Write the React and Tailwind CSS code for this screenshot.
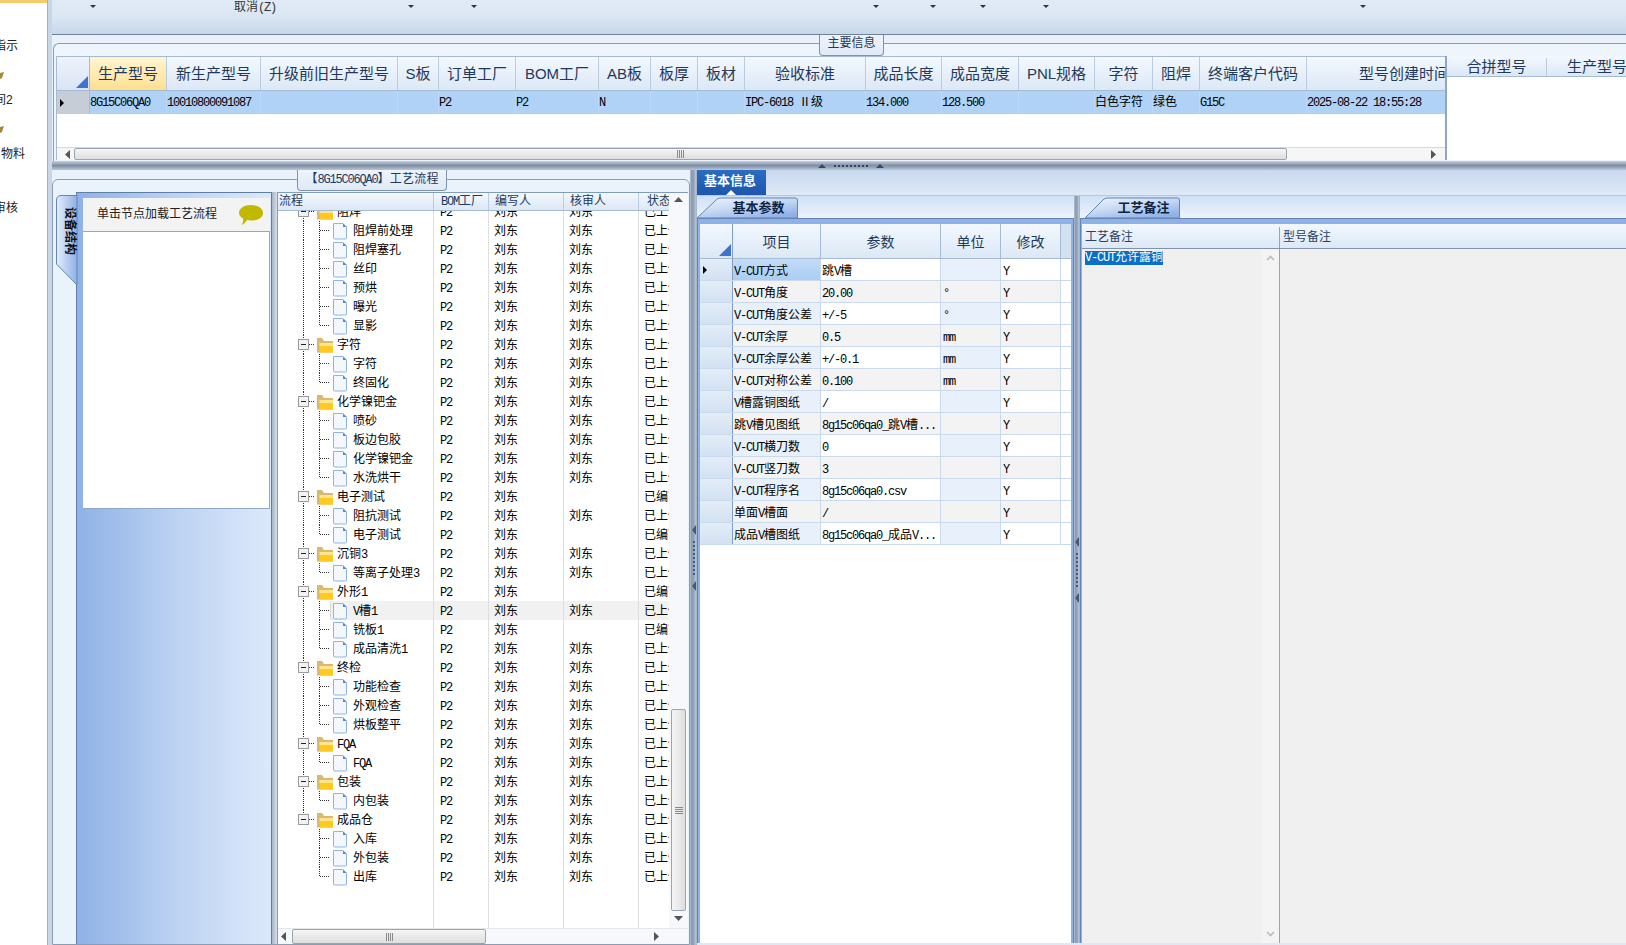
const monoCjk = "font-['Liberation_Mono','Noto_Sans_CJK_SC',monospace]";
const sansCjk = "font-['Liberation_Sans','Noto_Sans_CJK_SC',sans-serif]";

const topCols = [
  { label: "生产型号", w: "w-[77px]", value: "8G15C06QA0", active: true },
  { label: "新生产型号", w: "w-[94px]", value: "10010800091087" },
  { label: "升级前旧生产型号", w: "w-[137px]", value: "" },
  { label: "S板", w: "w-[41px]", value: "" },
  { label: "订单工厂", w: "w-[77px]", value: "P2" },
  { label: "BOM工厂", w: "w-[83px]", value: "P2" },
  { label: "AB板", w: "w-[52px]", value: "N" },
  { label: "板厚", w: "w-[47px]", value: "" },
  { label: "板材", w: "w-[47px]", value: "" },
  { label: "验收标准", w: "w-[121px]", value: "IPC-6018 Ⅱ级" },
  { label: "成品长度", w: "w-[76px]", value: "134.000" },
  { label: "成品宽度", w: "w-[77px]", value: "128.500" },
  { label: "PNL规格", w: "w-[76px]", value: "" },
  { label: "字符", w: "w-[58px]", value: "白色字符" },
  { label: "阻焊", w: "w-[47px]", value: "绿色" },
  { label: "终端客户代码", w: "w-[107px]", value: "G15C" },
  { label: "型号创建时间", w: "w-[140px]", value: "2025-08-22 18:55:28", pad: true },
];

// name, type (f folder / l leaf / e last leaf), has reviewer, status
const treeRows = [
  ["阻焊", "f", 1, "已上传"], ["阻焊前处理", "l", 1, "已上传"], ["阻焊塞孔", "l", 1, "已上传"], ["丝印", "l", 1, "已上传"],
  ["预烘", "l", 1, "已上传"], ["曝光", "l", 1, "已上传"], ["显影", "e", 1, "已上传"],
  ["字符", "f", 1, "已上传"], ["字符", "l", 1, "已上传"], ["终固化", "e", 1, "已上传"],
  ["化学镍钯金", "f", 1, "已上传"], ["喷砂", "l", 1, "已上传"], ["板边包胶", "l", 1, "已上传"], ["化学镍钯金", "l", 1, "已上传"], ["水洗烘干", "e", 1, "已上传"],
  ["电子测试", "f", 0, "已编写"], ["阻抗测试", "l", 1, "已上传"], ["电子测试", "e", 0, "已编写"],
  ["沉铜3", "f", 1, "已上传"], ["等离子处理3", "e", 1, "已上传"],
  ["外形1", "f", 0, "已编写"], ["V槽1", "l", 1, "已上传"], ["铣板1", "l", 0, "已编写"], ["成品清洗1", "e", 1, "已上传"],
  ["终检", "f", 1, "已上传"], ["功能检查", "l", 1, "已上传"], ["外观检查", "l", 1, "已上传"], ["烘板整平", "e", 1, "已上传"],
  ["FQA", "f", 1, "已上传"], ["FQA", "e", 1, "已上传"],
  ["包装", "f", 1, "已上传"], ["内包装", "e", 1, "已上传"],
  ["成品仓", "f", 1, "已上传"], ["入库", "l", 1, "已上传"], ["外包装", "l", 1, "已上传"], ["出库", "e", 1, "已上传"],
];

const params = [
  ["V-CUT方式", "跳V槽", "", "Y"],
  ["V-CUT角度", "20.00", "°", "Y"],
  ["V-CUT角度公差", "+/-5", "°", "Y"],
  ["V-CUT余厚", "0.5", "mm", "Y"],
  ["V-CUT余厚公差", "+/-0.1", "mm", "Y"],
  ["V-CUT对称公差", "0.100", "mm", "Y"],
  ["V槽露铜图纸", "/", "", "Y"],
  ["跳V槽见图纸", "8g15c06qa0_跳V槽...", "", "Y"],
  ["V-CUT横刀数", "0", "", "Y"],
  ["V-CUT竖刀数", "3", "", "Y"],
  ["V-CUT程序名", "8g15c06qa0.csv", "", "Y"],
  ["单面V槽面", "/", "", "Y"],
  ["成品V槽图纸", "8g15c06qa0_成品V...", "", "Y"],
];

// latin runs are squeezed to the half width of the original bitmap font
function T({ children }) {
  const parts = String(children).split(/([\x00-\x7f]+)/).filter(Boolean);
  return (
    <>
      {parts.map((p, i) =>
        /^[\x00-\x7f]+$/.test(p) ? (
          <span key={i} className="tracking-[-1.2px] whitespace-pre">{p}</span>
        ) : (
          <span key={i}>{p}</span>
        )
      )}
    </>
  );
}

function Caret() {
  return <div className="w-0 h-0 border-x-[3px] border-t-[3px] border-x-transparent border-t-[#333] mt-[5px]" />;
}

function RowArrow() {
  return <div className="w-0 h-0 border-y-[4px] border-l-[4px] border-y-transparent border-l-black" />;
}

function CornerMark() {
  return (
    <svg width="12" height="12" className="absolute right-[1px] bottom-[2px]">
      <polygon points="12,0 12,12 0,12" fill="#3f74c9" />
    </svg>
  );
}

function ArrowIcon({ dir }) {
  const pts = {
    left: "6,0 6,9 1,4.5",
    right: "0,0 0,9 5,4.5",
    up: "0,5 9,5 4.5,0",
    down: "0,0 9,0 4.5,5",
  }[dir];
  return (
    <svg width="9" height="9" className="shrink-0">
      <polygon points={pts} fill="#555" />
    </svg>
  );
}

function GripLines({ vertical }) {
  return vertical ? (
    <div className="flex flex-col gap-[1px]">
      {[0, 1, 2, 3].map((i) => <div key={i} className="w-[8px] h-[1px] bg-[#8a8a8a]" />)}
    </div>
  ) : (
    <div className="flex gap-[1px]">
      {[0, 1, 2, 3].map((i) => <div key={i} className="w-[1px] h-[8px] bg-[#8a8a8a]" />)}
    </div>
  );
}

function VGrip({ w }) {
  return (
    <div className={`${w} shrink-0 h-full bg-gradient-to-r from-[#8d9bae] via-[#8fa1ba] to-[#b9c7d9] flex flex-col items-center justify-center gap-[6px] border-x border-[#a9b6c6]`}>
      <div className="w-0 h-0 border-y-[5px] border-r-[4px] border-y-transparent border-r-[#44597a]" />
      <div className="flex flex-col gap-[2px]">
        {Array.from({ length: 9 }).map((_, i) => <div key={i} className="w-[2px] h-[2px] bg-[#3f5a86]" />)}
      </div>
      <div className="w-0 h-0 border-y-[5px] border-r-[4px] border-y-transparent border-r-[#44597a]" />
    </div>
  );
}

function SlantTab({ label, w }) {
  return (
    <div className={`relative ${w} h-[22px] flex items-center justify-center pl-[22px] pt-[4px] text-[13px] font-bold text-[#10243f]`}>
      <svg className="absolute inset-0 w-full h-full" viewBox="0 0 100 22" preserveAspectRatio="none">
        <defs>
          <linearGradient id="tabFill" x1="0" y1="0" x2="0.7" y2="1">
            <stop offset="0" stopColor="#f2f7fe" />
            <stop offset="0.55" stopColor="#c2d6f3" />
            <stop offset="1" stopColor="#8fb1e6" />
          </linearGradient>
        </defs>
        <path d="M0 22 L20 3 Q22 2 24 2 L97 2 Q99.5 2 99.5 4 L99.5 22 Z" fill="url(#tabFill)" stroke="#5f86b6" strokeWidth="1" vectorEffect="non-scaling-stroke" />
      </svg>
      <span className="relative">{label}</span>
    </div>
  );
}

function GroupTab({ children, className }) {
  return (
    <div className={`absolute h-[21px] flex items-center justify-center border border-t-0 border-[#7f93ad] rounded-b-[4px] bg-gradient-to-b from-[#eef4fb] to-[#dfe9f6] text-[12px] text-[#1e395b] ${className}`}>
      {children}
    </div>
  );
}

function TreePrefix({ type, lastGroup }) {
  const folder = type === "f";
  const parentLine = folder
    ? <line x1="25.5" y1="0" x2="25.5" y2={lastGroup ? 5 : 19} stroke="#333" strokeDasharray="1 1" />
    : lastGroup ? null : <line x1="25.5" y1="0" x2="25.5" y2="19" stroke="#333" strokeDasharray="1 1" />;
  return (
    <svg width={folder ? 59 : 75} height="19" className="shrink-0" shapeRendering="crispEdges">
      {parentLine}
      {folder ? (
        <g>
          <line x1="31" y1="9.5" x2="37" y2="9.5" stroke="#333" strokeDasharray="1 1" />
          <rect x="20.5" y="4.5" width="10" height="10" fill="#f2f2f2" stroke="#9a9a9a" />
          <line x1="23" y1="9.5" x2="28" y2="9.5" stroke="#222" />
          <g shapeRendering="auto">
            <path d="M39 3 L39 17.5 L55 17.5 L55 6 L46 6 L44 3 Z" fill="#d9b873" />
            <path d="M41.5 8 L55 8 L55 17.5 L41.5 17.5 Z" fill="#ffc91f" />
            <path d="M41.5 8 L55 8 L55 11 L41.5 11 Z" fill="#ffe58a" />
          </g>
        </g>
      ) : (
        <g>
          <line x1="41.5" y1="0" x2="41.5" y2={type === "e" ? 9.5 : 19} stroke="#333" strokeDasharray="1 1" />
          <line x1="42" y1="9.5" x2="52" y2="9.5" stroke="#333" strokeDasharray="1 1" />
          <g shapeRendering="auto">
            <path d="M55.5 2.5 L65 2.5 L68.5 6 L68.5 17 Q68.5 18 67.5 18 L56.5 18 Q55.5 18 55.5 17 Z" fill="#f4f8fe" stroke="#8fb4e2" />
            <path d="M65 2.5 L65 6 L68.5 6 Z" fill="#4f8ad6" />
          </g>
        </g>
      )}
    </svg>
  );
}

function TreeRow({ row, index }) {
  const [name, type, reviewer, status] = row;
  const selected = name === "V槽1";
  const lastGroup = index >= 32;
  return (
    <div className={`flex h-[19px] shrink-0 items-center text-[12px] text-black ${index === 0 ? "-mt-[9px]" : ""}`}>
      <div className="relative w-[155px] h-full flex items-center shrink-0">
        {selected && <div className="absolute left-[52px] right-0 inset-y-0 bg-[#f1f1f1] rounded-l-[3px] border-l border-[#d5d5d5]" />}
        <div className="relative flex items-center">
          <TreePrefix type={type} lastGroup={lastGroup} />
          <span className="whitespace-nowrap pt-[2px]"><T>{name}</T></span>
        </div>
      </div>
      <div className={`w-[55px] h-full flex items-center pl-[6px] pt-[2px] border-l border-[#dfdfdf] shrink-0 ${selected ? "bg-[#f1f1f1]" : ""}`}><T>P2</T></div>
      <div className={`w-[75px] h-full flex items-center pl-[5px] pt-[2px] border-l border-[#dfdfdf] shrink-0 ${selected ? "bg-[#f1f1f1]" : ""}`}>刘东</div>
      <div className={`w-[75px] h-full flex items-center pl-[5px] pt-[2px] border-l border-[#dfdfdf] shrink-0 ${selected ? "bg-[#f1f1f1]" : ""}`}>{reviewer ? "刘东" : ""}</div>
      <div className={`flex-1 h-full flex items-center pl-[5px] pt-[2px] border-l border-[#dfdfdf] overflow-hidden whitespace-nowrap ${selected ? "bg-[#f1f1f1]" : ""}`}>{status}</div>
    </div>
  );
}

function ParamRow({ row, index }) {
  const odd = index % 2 === 0;
  const first = index === 0;
  const gray = "bg-[#f3f3f3]";
  const labelBg = first ? "bg-gradient-to-b from-[#c2dcf8] to-[#a9cdf4]" : odd ? "bg-[#e8f1fb]" : gray;
  return (
    <div className="flex h-[22px] text-[12px] text-black border-b border-[#c9d9ee]">
      <div className="w-[33px] shrink-0 flex items-center pl-[3px] pt-[1px] bg-gradient-to-b from-[#e3edf8] to-[#d3e1f2] border-r border-[#7f9fc6]">
        {first && <RowArrow />}
      </div>
      <div className={`w-[88px] shrink-0 flex items-center pl-[1px] pt-[4px] whitespace-nowrap overflow-hidden border-r border-[#c9d9ee] ${labelBg}`}><T>{row[0]}</T></div>
      <div className={`w-[120px] shrink-0 flex items-center pl-[1px] pt-[4px] whitespace-nowrap overflow-hidden border-r border-[#c9d9ee] ${odd ? "bg-white" : gray}`}><T>{row[1]}</T></div>
      <div className={`w-[60px] shrink-0 flex items-center pl-[2px] pt-[4px] border-r border-[#c9d9ee] ${odd ? "bg-[#e8f1fb]" : gray}`}><T>{row[2]}</T></div>
      <div className={`w-[60px] shrink-0 flex items-center pl-[2px] pt-[4px] border-r border-[#c9d9ee] ${odd ? "bg-white" : gray}`}><T>{row[3]}</T></div>
      <div className="flex-1 bg-white" />
    </div>
  );
}

export default function App() {
  return (
    <div className={`flex w-[1626px] h-[945px] overflow-hidden bg-[#c8d6e8] ${monoCjk}`}>
      {/* left menu, cut off by the window */}
      <div className={`w-[48px] shrink-0 h-full bg-white border-r border-[#a7b2bf] overflow-hidden flex flex-col text-[12px] text-[#222] ${sansCjk}`}>
        <div className="h-[3px] bg-[#f5cb6a] shrink-0" />
        <div className="h-[33px] shrink-0" />
        {[["指示", "-ml-[6px]"], ["间2", "-ml-[6px]"], ["物料", "ml-[1px]"], ["审核", "-ml-[6px]"]].map(([t, ml], i) => (
          <div key={t} className="h-[54px] shrink-0">
            <div className={`h-[20px] flex items-center whitespace-nowrap ${ml}`}>{t}</div>
            {i < 2 && (
              <svg width="4" height="9" className="mt-[15px]">
                <path d="M0 2 L4 1 L2 7 L0 8 Z" fill="#a58a3c" />
              </svg>
            )}
          </div>
        ))}
      </div>

      <div className="flex-1 min-w-0 flex flex-col pl-[4px]">
        {/* toolbar */}
        <div className="h-[35px] shrink-0 flex items-start border-b border-[#6f8199] bg-gradient-to-b from-[#e1ebf7] via-[#dbe6f4] to-[#c7d7eb] text-[12px] text-[#333]">
          <div className="ml-[38px]"><Caret /></div>
          <div className="ml-[138px] mt-[1px] leading-[14px]"><T>取消(Z)</T></div>
          <div className="ml-[132px]"><Caret /></div>
          <div className="ml-[57px]"><Caret /></div>
          <div className="ml-[396px]"><Caret /></div>
          <div className="ml-[51px]"><Caret /></div>
          <div className="ml-[44px]"><Caret /></div>
          <div className="ml-[57px]"><Caret /></div>
          <div className="ml-[311px]"><Caret /></div>
        </div>

        {/* main info */}
        <div className="relative h-[126px] shrink-0 bg-[#e9f1fb] pt-[8px] pl-[1px]">
          <div className="h-full border-t border-l border-[#8a9db5] rounded-tl-[6px] pt-[12px] pl-[2px] bg-[#eff5fc]">
            <div className="flex h-[104px]">
              <div className="w-[1389px] shrink-0 flex flex-col overflow-hidden border-l border-t border-[#a5bad3] bg-white">
                <div className={`flex h-[34px] shrink-0 text-[15px] text-[#1e395b] border-b border-[#a5bad3] ${sansCjk}`}>
                  <div className="relative w-[33px] shrink-0 bg-gradient-to-b from-[#edf3fb] to-[#d9e5f4] border-r border-[#a5bad3]"><CornerMark /></div>
                  {topCols.map((c) => (
                    <div key={c.label} className={`${c.w} shrink-0 flex items-center pt-[1px] whitespace-nowrap overflow-hidden border-r border-[#b8cbe1] ${c.pad ? "pl-[52px]" : "justify-center"} ${c.active ? "bg-gradient-to-b from-[#fff6d2] to-[#ffdf8f]" : "bg-gradient-to-b from-[#f3f8fe] to-[#dce8f6]"}`}>
                      {c.label}
                    </div>
                  ))}
                </div>
                <div className="flex h-[23px] shrink-0 text-[12px] text-black">
                  <div className="w-[33px] shrink-0 flex items-center pl-[3px] bg-[#c6cdd7] border-r border-[#a5bad3]"><RowArrow /></div>
                  {topCols.map((c) => (
                    <div key={c.label} className={`${c.w} shrink-0 flex items-center whitespace-nowrap overflow-hidden bg-[#afd2f6] border-r border-[#bcd8f6]`}>
                      <T>{c.value}</T>
                    </div>
                  ))}
                </div>
                <div className="flex-1" />
                <div className="h-[13px] shrink-0 flex items-center bg-[#f6f6f6] border-t border-[#d8d8d8]">
                  <div className="w-[10px] shrink-0 ml-[7px]"><ArrowIcon dir="left" /></div>
                  <div className="w-[1213px] h-[12px] shrink-0 rounded-[2px] border border-[#9aa5b3] bg-gradient-to-b from-[#f5f5f5] to-[#dedede] flex items-center justify-center">
                    <GripLines />
                  </div>
                  <div className="flex-1" />
                  <div className="mr-[5px]"><ArrowIcon dir="right" /></div>
                </div>
              </div>
              <div className="flex-1 min-w-0 flex flex-col border-l-2 border-[#8fa5c2] bg-white">
                <div className={`flex h-[21px] shrink-0 pt-[2px] text-[15px] text-[#1e395b] border-b border-[#a5bad3] bg-gradient-to-b from-[#f3f8fe] to-[#dce8f6] ${sansCjk}`}>
                  <div className="w-[100px] shrink-0 flex items-center justify-center border-r border-[#b8cbe1]">合拼型号</div>
                  <div className="w-[100px] shrink-0 flex items-center justify-center">生产型号</div>
                </div>
              </div>
            </div>
          </div>
          <GroupTab className="left-[767px] top-0 w-[65px] pb-[2px]">主要信息</GroupTab>
        </div>

        {/* horizontal splitter */}
        <div className="relative h-[9px] shrink-0 flex items-center justify-center bg-gradient-to-b from-[#c6d2e0] via-[#7f8ea3] to-[#b9c6d6]">
          <div className="flex items-center gap-[8px] ml-[24px]">
            <div className="w-0 h-0 border-x-[4px] border-b-[4px] border-x-transparent border-b-[#2f4a75]" />
            <div className="flex gap-[2px]">
              {Array.from({ length: 9 }).map((_, i) => <div key={i} className="w-[2px] h-[2px] bg-[#27446f]" />)}
            </div>
            <div className="w-0 h-0 border-x-[4px] border-b-[4px] border-x-transparent border-b-[#2f4a75]" />
          </div>
        </div>

        {/* lower area */}
        <div className="flex-1 min-h-0 flex">
          {/* process flow group */}
          <div className="relative w-[638px] shrink-0 pt-[9px] bg-[#e9f1fb]">
            <div className="h-full flex border border-[#8a9db5] rounded-t-[6px] bg-[#eaf2fb] pt-[12px] pr-[1px]">
              <div className="relative w-[23px] shrink-0">
                <svg width="24" height="92" className="absolute left-[3px] top-[3px]">
                  <defs>
                    <linearGradient id="navTab" x1="0" y1="0" x2="1" y2="0">
                      <stop offset="0" stopColor="#e3edfb" />
                      <stop offset="1" stopColor="#8fb1e6" />
                    </linearGradient>
                  </defs>
                  <path d="M0.5 69 L0.5 5 Q0.5 1 5 0.5 L21 0.5 L21 90 Z" fill="url(#navTab)" stroke="#5f86b6" />
                </svg>
                <div className="absolute left-[9px] top-[15px] w-[14px] text-[12px] font-bold text-[#111] [writing-mode:vertical-rl] [text-orientation:sideways] leading-[14px]">设备结构</div>
              </div>
              <div className="w-[196px] shrink-0 h-full border border-[#5f7ea6] border-b-0 bg-gradient-to-r from-[#8fb1e6] via-[#bcd2f2] to-[#dce9fb] pt-[5px] pl-[6px] pr-[1px] bg-clip-padding">
                <div className="h-[34px] bg-[#f3f3f4] flex items-center justify-between pl-[14px] pr-[7px] pt-[1px] text-[12px] text-[#222] border-b border-[#8fa8c8]">
                  <span>单击节点加载工艺流程</span>
                  <svg width="24" height="20">
                    <path d="M12 0 C19 0 24 3.5 24 8 C24 12.5 19 15.5 12 15.5 C10.5 15.5 9 15.3 8 15 C7 17 5 19.5 2.5 20 C4 18 4.5 15.5 4 13.5 C1.5 12 0 10 0 8 C0 3.5 5 0 12 0 Z" fill="#c2b800" />
                  </svg>
                </div>
                <div className="h-[277px] bg-white border-r border-b border-[#8fa8c8]" />
              </div>
              <div className="w-[5px] shrink-0 bg-gradient-to-r from-[#a8b5c6] to-[#d5dfeb]" />
              {/* flow tree */}
              <div className="flex-1 min-w-0 h-full flex flex-col border-t border-l border-[#7f9db9] bg-white">
                <div className="flex-1 min-h-0 flex">
                  <div className="w-[391px] shrink-0 flex flex-col overflow-hidden">
                    <div className="flex h-[18px] shrink-0 text-[12px] text-[#1e395b] border-b border-[#a5bad3] bg-gradient-to-b from-[#f3f8fe] to-[#dce8f6]">
                      <div className="w-[155px] shrink-0 pl-[1px] flex items-center">流程</div>
                      <div className="w-[55px] shrink-0 pl-[7px] flex items-center border-l border-[#b8cbe1]"><T>BOM工厂</T></div>
                      <div className="w-[75px] shrink-0 pl-[6px] flex items-center border-l border-[#b8cbe1]">编写人</div>
                      <div className="w-[75px] shrink-0 pl-[6px] flex items-center border-l border-[#b8cbe1]">核审人</div>
                      <div className="flex-1 pl-[8px] flex items-center border-l border-[#b8cbe1] overflow-hidden whitespace-nowrap">状态</div>
                    </div>
                    <div className="flex-1 min-h-0 flex flex-col overflow-hidden">
                      {treeRows.map((r, i) => <TreeRow key={i} row={r} index={i} />)}
                      <div className="flex-1 flex">
                        <div className="w-[155px] shrink-0" />
                        <div className="w-[55px] shrink-0 border-l border-[#dfdfdf]" />
                        <div className="w-[75px] shrink-0 border-l border-[#dfdfdf]" />
                        <div className="w-[75px] shrink-0 border-l border-[#dfdfdf]" />
                        <div className="flex-1 border-l border-[#dfdfdf]" />
                      </div>
                    </div>
                  </div>
                  <div className="flex-1 flex flex-col items-center bg-[#f6f8fb] pt-[4px] pb-[3px]">
                    <ArrowIcon dir="up" />
                    <div className="flex-1" />
                    <div className="w-[15px] h-[202px] shrink-0 rounded-[2px] border border-[#9aa5b3] bg-gradient-to-r from-[#f5f5f5] to-[#dedede] flex items-center justify-center">
                      <GripLines vertical />
                    </div>
                    <div className="h-[5px] shrink-0" />
                    <ArrowIcon dir="down" />
                  </div>
                </div>
                <div className="h-[16px] shrink-0 flex items-center bg-[#f6f8fb] border-t border-[#e6e6e6]">
                  <div className="ml-[2px] w-[12px] shrink-0"><ArrowIcon dir="left" /></div>
                  <div className="w-[194px] h-[15px] shrink-0 rounded-[2px] border border-[#9aa5b3] bg-gradient-to-b from-[#f5f5f5] to-[#dedede] flex items-center justify-center">
                    <GripLines />
                  </div>
                  <div className="flex-1" />
                  <div className="mr-[25px]"><ArrowIcon dir="right" /></div>
                </div>
              </div>
            </div>
            <GroupTab className="left-[245px] top-0 w-[150px] tracking-[0.2px]"><T>【8G15C06QA0】工艺流程</T></GroupTab>
          </div>

          <VGrip w="w-[7px]" />

          {/* basic info */}
          <div className="flex-1 min-w-0 flex flex-col pb-[2px] bg-[#dfe9f6]">
            <div className="h-[26px] shrink-0 bg-gradient-to-b from-[#c8d8ee] to-[#dfe9f6] border-b border-[#b9c8da]">
              <div className="relative w-[69px] h-full flex items-center justify-center pr-[3px] pb-[2px] bg-gradient-to-b from-[#2a6cc6] to-[#1d56ad] text-[13px] font-bold text-white">
                基本信息
                <div className="absolute bottom-0 left-[29px] w-0 h-0 border-x-[5px] border-b-[5px] border-x-transparent border-b-white" />
              </div>
            </div>
            <div className="flex-1 min-h-0 flex">
              <div className="w-[377px] shrink-0 flex flex-col">
                <div className="h-[22px] shrink-0 bg-gradient-to-b from-[#cfe0f6] to-[#edf3fc]">
                  <SlantTab label="基本参数" w="w-[101px]" />
                </div>
                <div className="flex-1 min-h-0 border border-[#5f86b6] bg-[#8fb1e6] pt-[5px] px-[2px] border-b-0">
                  <div className="h-full bg-white flex flex-col">
                    <div className="flex h-[35px] shrink-0 text-[14px] text-[#1e395b] border-b border-[#a5bad3] bg-gradient-to-b from-[#f3f8fe] to-[#dce8f6]">
                      <div className="relative w-[33px] shrink-0 border-r border-[#7f9fc6]"><CornerMark /></div>
                      <div className="w-[88px] shrink-0 flex items-center justify-center pt-[5px] border-r border-[#a5bad3]">项目</div>
                      <div className="w-[120px] shrink-0 flex items-center justify-center pt-[5px] border-r border-[#a5bad3]">参数</div>
                      <div className="w-[60px] shrink-0 flex items-center justify-center pt-[5px] border-r border-[#a5bad3]">单位</div>
                      <div className="w-[60px] shrink-0 flex items-center justify-center pt-[5px] border-r border-[#a5bad3]">修改</div>
                      <div className="flex-1 bg-[#d3e0f0]" />
                    </div>
                    {params.map((r, i) => <ParamRow key={r[0]} row={r} index={i} />)}
                  </div>
                </div>
              </div>
              <VGrip w="w-[6px]" />
              <div className="flex-1 min-w-0 flex flex-col">
                <div className="h-[22px] shrink-0 bg-gradient-to-b from-[#cfe0f6] to-[#edf3fc] pl-[5px]">
                  <SlantTab label="工艺备注" w="w-[95px]" />
                </div>
                <div className="flex-1 min-h-0 border-t border-l border-[#5f86b6] bg-[#8fb1e6] pt-[5px] pl-[1px]">
                  <div className="h-full flex flex-col bg-[#f0f0f0]">
                    <div className="flex h-[25px] shrink-0 pt-[3px] text-[12px] text-[#2b3f5f] border-b border-[#7f93ad] bg-gradient-to-b from-[#f3f8fe] to-[#dce8f6]">
                      <div className="w-[198px] shrink-0 pl-[3px] flex items-center border-r border-[#8fa5c2]">工艺备注</div>
                      <div className="flex-1 pl-[3px] flex items-center">型号备注</div>
                    </div>
                    <div className="flex-1 min-h-0 flex">
                      <div className="w-[198px] shrink-0 flex border-r border-[#8fa5c2]">
                        <div className="flex-1 pl-[3px] pt-[2px] text-[12px] leading-[14px]">
                          <span className="bg-[#0a6fc9] text-white"><T>V-CUT允许露铜</T></span>
                        </div>
                        <div className="w-[17px] shrink-0 flex flex-col items-center justify-between py-[6px] bg-[#f4f4f4]">
                          <svg width="9" height="6"><path d="M1 5 L4.5 1.5 L8 5" fill="none" stroke="#bbb" strokeWidth="1.6" /></svg>
                          <svg width="9" height="6"><path d="M1 1 L4.5 4.5 L8 1" fill="none" stroke="#bbb" strokeWidth="1.6" /></svg>
                        </div>
                      </div>
                      <div className="flex-1" />
                    </div>
                  </div>
                </div>
              </div>
            </div>
          </div>
        </div>
      </div>
    </div>
  );
}
